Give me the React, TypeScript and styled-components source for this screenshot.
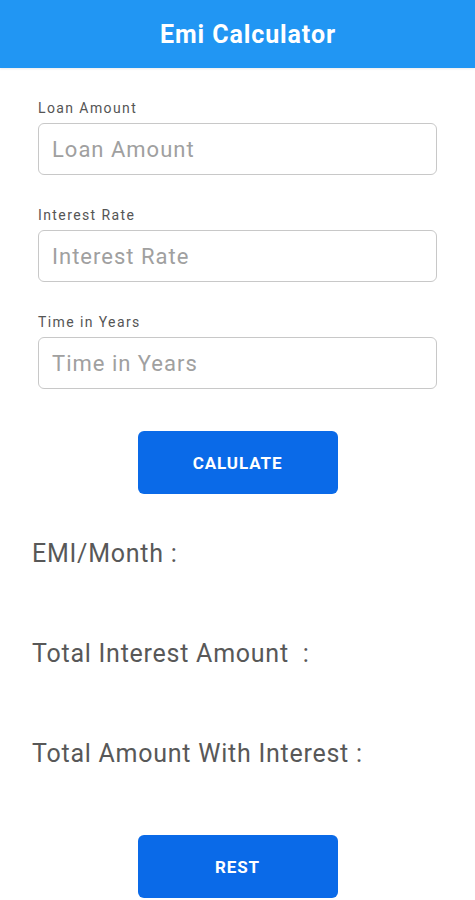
import styled, { createGlobalStyle } from 'styled-components';

const GlobalStyle = createGlobalStyle`
  body {
    margin: 0;
    background: #ffffff;
    font-family: Roboto, "Liberation Sans", sans-serif;
  }
`;

const Page = styled.div`
  width: 475px;
  display: flex;
  flex-direction: column;
`;

const Header = styled.header`
  height: 68px;
  background-color: #2196f3;
  display: flex;
  align-items: center;
  justify-content: center;
  padding-left: 21px;
  box-shadow: 0 1px 2px rgba(0, 0, 0, 0.08);
`;

const Title = styled.h1`
  margin: 0;
  color: #ffffff;
  font-size: 25px;
  font-weight: 700;
  letter-spacing: 0.9px;
`;

const Form = styled.div`
  display: flex;
  flex-direction: column;
  gap: 32px;
  padding: 32px 38px 0;
`;

const Field = styled.div`
  display: flex;
  flex-direction: column;
  gap: 7px;
`;

const Label = styled.label`
  font-size: 14px;
  line-height: 16px;
  letter-spacing: 1.4px;
  color: #555555;
`;

const Input = styled.input`
  box-sizing: border-box;
  height: 52px;
  width: 100%;
  border: 1px solid #c8c8c8;
  border-radius: 6px;
  padding: 0 13px;
  font-family: Roboto, "Liberation Sans", sans-serif;
  font-size: 22px;
  letter-spacing: 1px;
  color: #333333;
  outline: none;

  &::placeholder {
    color: #a0a0a0;
  }
`;

const ButtonRow = styled.div<{ $top: number }>`
  display: flex;
  justify-content: center;
  margin-top: ${(p) => p.$top}px;
`;

const Button = styled.button`
  width: 200px;
  height: 63px;
  border: none;
  border-radius: 6px;
  background-color: #0a6ae8;
  color: #ffffff;
  font-family: Roboto, "Liberation Sans", sans-serif;
  font-size: 17px;
  font-weight: 700;
  letter-spacing: 0.9px;
  text-transform: uppercase;
`;

const Results = styled.div`
  display: flex;
  flex-direction: column;
  gap: 72px;
  margin-top: 46px;
  padding: 0 32px;
`;

const ResultLine = styled.div`
  font-size: 25px;
  line-height: 28px;
  letter-spacing: 0.75px;
  color: #585858;
  white-space: pre;
`;

const fields = ['Loan Amount', 'Interest Rate', 'Time in Years'];

function App() {
  return (
    <>
      <GlobalStyle />
      <Page>
        <Header>
          <Title>Emi Calculator</Title>
        </Header>
        <Form>
          {fields.map((f) => (
            <Field key={f}>
              <Label>{f}</Label>
              <Input placeholder={f} />
            </Field>
          ))}
        </Form>
        <ButtonRow $top={42}>
          <Button>Calulate</Button>
        </ButtonRow>
        <Results>
          <ResultLine>EMI/Month :</ResultLine>
          <ResultLine>Total Interest Amount  :</ResultLine>
          <ResultLine>Total Amount With Interest :</ResultLine>
        </Results>
        <ButtonRow $top={67}>
          <Button>Rest</Button>
        </ButtonRow>
      </Page>
    </>
  );
}

export default App;
